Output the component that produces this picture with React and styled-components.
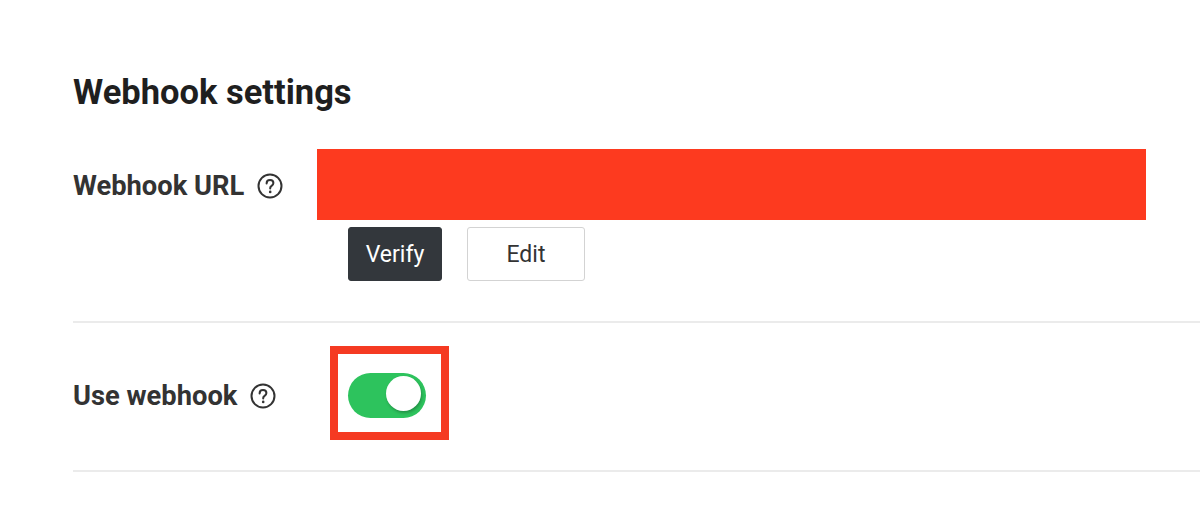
import React, { useState } from 'react';
import styled, { createGlobalStyle } from 'styled-components';

const GlobalStyle = createGlobalStyle`
  html, body {
    margin: 0;
    padding: 0;
    background: #fff;
  }
  body {
    font-family: Roboto, "Liberation Sans", Arial, sans-serif;
    color: #222;
  }
`;

// Circled question mark used next to each label
const HelpIcon = () => (
  <HelpWrap title="Help">
    <svg width="26" height="26" viewBox="0 0 26 26">
      <circle cx="13" cy="13" r="11.5" fill="none" stroke="#333" strokeWidth="2" />
      <path
        d="M9.6 10.4c0-2 1.5-3.3 3.4-3.3 2 0 3.4 1.3 3.4 3 0 1.4-.8 2.1-1.8 2.8-.9.6-1.4 1.1-1.4 2.1v.6"
        fill="none"
        stroke="#333"
        strokeWidth="2"
        strokeLinecap="round"
      />
      <circle cx="13.2" cy="18.9" r="1.3" fill="#333" />
    </svg>
  </HelpWrap>
);

export default function App() {
  const [enabled, setEnabled] = useState(true);

  return (
    <>
      <GlobalStyle />
      <Page>
        <Title>Webhook settings</Title>

        <Row $first>
          <Label $top>
            Webhook URL
            <HelpIcon />
          </Label>
          <Value>
            {/* redacted url field */}
            <Redacted aria-label="Webhook URL" />
            <Actions>
              <Button $primary>Verify</Button>
              <Button>Edit</Button>
            </Actions>
          </Value>
        </Row>

        <Row>
          <Label>
            Use webhook
            <HelpIcon />
          </Label>
          <Value>
            <Highlight>
              <Switch
                role="switch"
                aria-checked={enabled}
                $on={enabled}
                onClick={() => setEnabled(!enabled)}
              >
                <Knob $on={enabled} />
              </Switch>
            </Highlight>
          </Value>
        </Row>
      </Page>
    </>
  );
}

const Page = styled.div`
  padding: 74px 0 0 73px;
  width: 1200px;
  height: 506px;
  box-sizing: border-box;
  overflow: hidden;
`;

const Title = styled.h2`
  margin: 0 0 39px;
  font-size: 34.5px;
  line-height: 36px;
  font-weight: 700;
  color: #1f1f1f;
`;

const Row = styled.div`
  display: grid;
  grid-template-columns: 275px 1fr;
  align-items: center;
  border-bottom: 2px solid #ebebeb;
  padding: ${p => (p.$first ? '0 0 40px' : '23px 0 30px')};
`;

const Label = styled.div`
  display: flex;
  align-items: center;
  gap: 13px;
  font-size: 27.3px;
  font-weight: 700;
  color: #333;
  align-self: ${p => (p.$top ? 'start' : 'center')};
  margin-top: ${p => (p.$top ? '21px' : '6px')};
`;

const HelpWrap = styled.span`
  display: inline-flex;
  width: 26px;
  height: 26px;
`;

const Value = styled.div`
  display: flex;
  flex-direction: column;
  align-items: flex-start;
`;

const Redacted = styled.div`
  margin-left: -31px;
  width: 829px;
  height: 71px;
  background: #fd3a1f;
`;

const Actions = styled.div`
  display: flex;
  gap: 25px;
  margin-top: 7px;
`;

const Button = styled.button`
  height: 54px;
  padding: 0 ${p => (p.$primary ? '14px' : '38px')};
  min-width: ${p => (p.$primary ? '94px' : '118px')};
  border-radius: 3px;
  border: 1px solid ${p => (p.$primary ? '#33373c' : '#d3d3d3')};
  background: ${p => (p.$primary ? '#33373c' : '#fff')};
  color: ${p => (p.$primary ? '#fff' : '#333')};
  font-family: Roboto, "Liberation Sans", Arial, sans-serif;
  font-size: 23px;
  font-weight: 400;
  cursor: pointer;
`;

const Highlight = styled.div`
  margin-left: -18px;
  border: 8px solid #f53a22;
  padding: 19px 15px 14px 10px;
`;

const Switch = styled.div`
  position: relative;
  width: 78px;
  height: 45px;
  border-radius: 23px;
  background: ${p => (p.$on ? '#2dc35d' : '#ccc')};
  cursor: pointer;
`;

const Knob = styled.div`
  position: absolute;
  top: 3px;
  left: ${p => (p.$on ? '38px' : '3px')};
  width: 35px;
  height: 35px;
  border-radius: 50%;
  background: #fff;
  box-shadow: 1px 2px 3px rgba(0, 0, 0, 0.25);
`;
